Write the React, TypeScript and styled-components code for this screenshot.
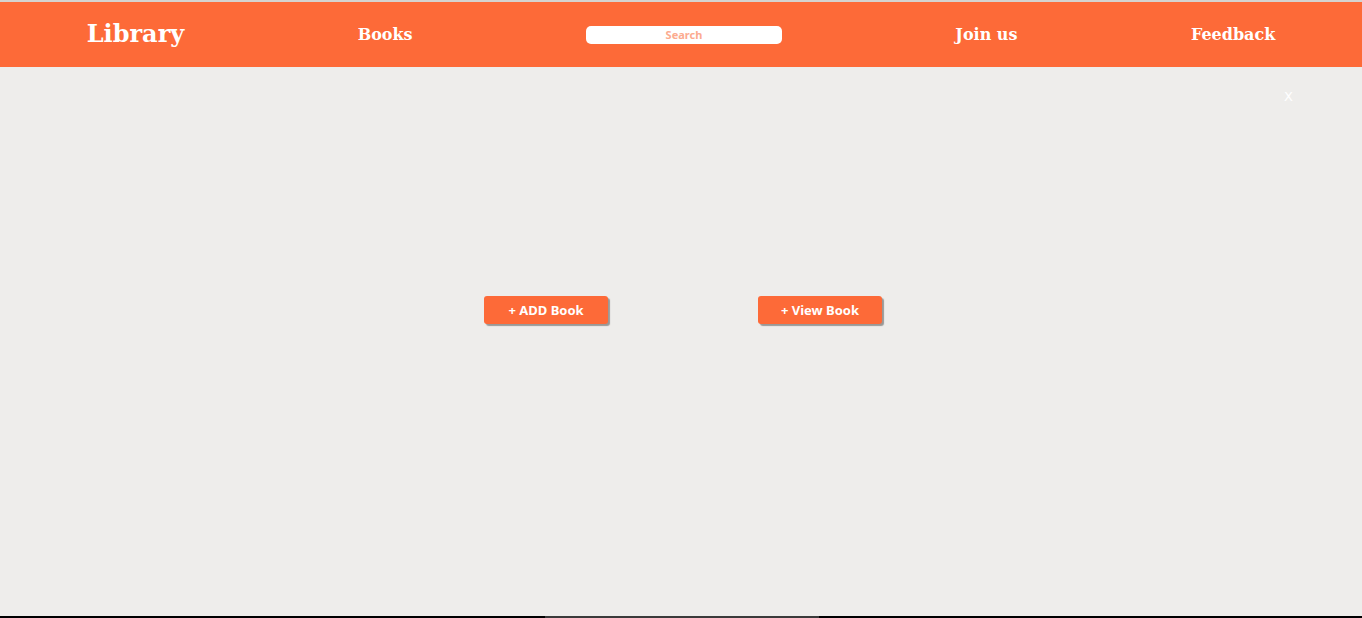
import React from "react";
import styled, { createGlobalStyle } from "styled-components";

const GlobalStyle = createGlobalStyle`
  html, body { margin: 0; padding: 0; overflow: hidden; }
  body { background: #eeedeb; }
`;

const Page = styled.div`
  height: 618px;
  display: flex;
  flex-direction: column;
  background: #eeedeb;
`;

const TopEdge = styled.div`
  height: 2px;
  background: #d5d3d0;
`;

const Header = styled.header`
  height: 65px;
  background: #fd6a38;
  display: flex;
  align-items: center;
  justify-content: space-around;
`;

const Brand = styled.a`
  font-family: "DejaVu Serif", serif;
  font-weight: bold;
  font-size: 24px;
  color: #ffffff;
  text-decoration: none;
  margin-top: -2px;
`;

const NavLink = styled.a`
  font-family: "DejaVu Serif", serif;
  font-weight: bold;
  font-size: 16px;
  color: #ffffff;
  text-decoration: none;
`;

const SearchBox = styled.input`
  width: 196px;
  height: 18px;
  box-sizing: border-box;
  border: none;
  border-radius: 5px;
  background: #ffffff;
  text-align: center;
  font-family: "Noto Sans", sans-serif;
  font-weight: bold;
  font-size: 11px;
  padding: 0;
  outline: none;
  &::placeholder { color: #fcab8f; }
`;

const Main = styled.main`
  flex: 1;
  display: flex;
  flex-direction: column;
`;

const CloseRow = styled.div`
  display: flex;
  justify-content: flex-end;
  padding: 22px 69px 0 0;
`;

const Close = styled.span`
  font-family: "DejaVu Sans", sans-serif;
  font-size: 13px;
  color: #ffffff;
`;

const Actions = styled.div`
  display: flex;
  justify-content: center;
  gap: 150px;
  margin-top: 192px;
  padding-left: 4px;
`;

const ActionButton = styled.button`
  width: 124px;
  height: 28px;
  border: none;
  border-radius: 3px;
  background: #fd6a38;
  color: #ffffff;
  font-family: "Noto Sans", sans-serif;
  font-weight: bold;
  font-size: 13px;
  box-shadow: 2px 2px 1px #9a9896;
  cursor: pointer;
  padding: 0;
`;

const BottomBar = styled.div`
  height: 2px;
  background: #000000;
  display: flex;
  justify-content: center;
`;

const Thumb = styled.div`
  width: 274px;
  height: 2px;
  margin-left: 2px;
  background: #3a3a3a;
`;

export default function App() {
  return (
    <>
      <GlobalStyle />
      <Page>
        <TopEdge />
        <Header>
          <Brand>Library</Brand>
          <NavLink>Books</NavLink>
          <SearchBox placeholder="Search" />
          <NavLink>Join us</NavLink>
          <NavLink>Feedback</NavLink>
        </Header>
        <Main>
          <CloseRow>
            <Close>X</Close>
          </CloseRow>
          <Actions>
            <ActionButton>+ ADD Book</ActionButton>
            <ActionButton>+ View Book</ActionButton>
          </Actions>
        </Main>
        <BottomBar>
          <Thumb />
        </BottomBar>
      </Page>
    </>
  );
}
